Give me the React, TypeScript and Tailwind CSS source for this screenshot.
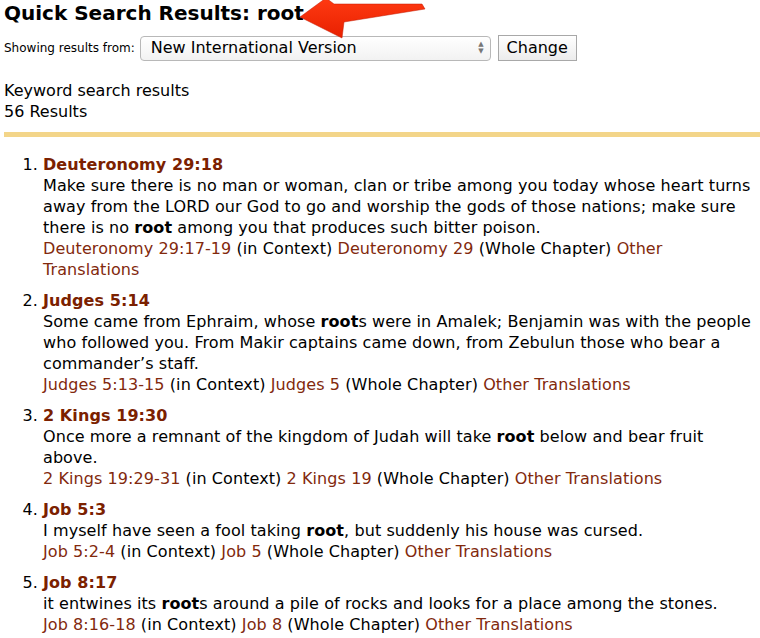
const RESULTS = [
  {
    ref: "Deuteronomy 29:18",
    text: [
      "Make sure there is no man or woman, clan or tribe among you today whose heart turns away from the LORD our God to go and worship the gods of those nations; make sure there is no ",
      { b: "root" },
      " among you that produces such bitter poison.",
    ],
    context: "Deuteronomy 29:17-19",
    chapter: "Deuteronomy 29",
  },
  {
    ref: "Judges 5:14",
    text: [
      "Some came from Ephraim, whose ",
      { b: "root" },
      "s were in Amalek; Benjamin was with the people who followed you. From Makir captains came down, from Zebulun those who bear a commander\u2019s staff.",
    ],
    context: "Judges 5:13-15",
    chapter: "Judges 5",
  },
  {
    ref: "2 Kings 19:30",
    text: [
      "Once more a remnant of the kingdom of Judah will take ",
      { b: "root" },
      " below and bear fruit above.",
    ],
    context: "2 Kings 19:29-31",
    chapter: "2 Kings 19",
  },
  {
    ref: "Job 5:3",
    text: [
      "I myself have seen a fool taking ",
      { b: "root" },
      ", but suddenly his house was cursed.",
    ],
    context: "Job 5:2-4",
    chapter: "Job 5",
  },
  {
    ref: "Job 8:17",
    text: [
      "it entwines its ",
      { b: "root" },
      "s around a pile of rocks and looks for a place among the stones.",
    ],
    context: "Job 8:16-18",
    chapter: "Job 8",
  },
];

type Part = string | { b: string };

function Arrow() {
  return (
    <svg className="absolute left-[294px] top-0" width="140" height="42" viewBox="0 0 140 42">
      <defs>
        <linearGradient id="ar" x1="0" y1="0" x2="0" y2="1">
          <stop offset="0" stopColor="#ff3a12" />
          <stop offset="1" stopColor="#e82000" />
        </linearGradient>
      </defs>
      <polygon
        points="6,17 32,-2 40,4 128,4 131,9 50,22 48,38"
        fill="url(#ar)"
        stroke="#c01800"
        strokeWidth="0.5"
      />
    </svg>
  );
}

export default function App() {
  return (
    <div className="relative min-h-[638px] w-[760px] overflow-hidden bg-white pl-1 text-black font-['Verdana','DejaVu_Sans',sans-serif]">
      <h1 className="pt-[1px] text-[20px] font-bold leading-[24px]">Quick Search Results: root</h1>
      <Arrow />

      <div className="mt-[10px] flex items-center">
        <span className="text-[12px]">Showing results from:</span>
        <div className="ml-[5px] flex h-[25px] w-[351px] items-center justify-between rounded-[4px] border border-[#b8b8b8] bg-gradient-to-b from-white to-[#f2f2f2] pl-[10px] pr-[6px] text-[16px]">
          <span>New International Version</span>
          <span className="flex flex-col text-[7px] leading-[7px] text-[#777]">
            <span>▲</span>
            <span>▼</span>
          </span>
        </div>
        <button className="ml-[7px] h-[26px] w-[79px] border border-[#a8a8a8] bg-gradient-to-b from-white to-[#ececec] text-[16px]">
          Change
        </button>
      </div>

      <div className="mt-[19px] text-[16px] leading-[21px]">
        <div>Keyword search results</div>
        <div>56 Results</div>
      </div>

      <div className="mt-[10px] h-[5px] bg-[#f3d589]" />

      <ol className="mt-[17px] list-decimal pl-[39px] pr-1 text-[16px] leading-[21px] tracking-[0.08px]">
        {RESULTS.map((r) => (
          <li key={r.ref} className="mb-[10px]">
            <a className="font-bold text-[#7b2100]">{r.ref}</a>
            <div>
              {(r.text as Part[]).map((p, i) =>
                typeof p === "string" ? <span key={i}>{p}</span> : <b key={i}>{p.b}</b>
              )}
            </div>
            <div>
              <a className="text-[#82290d]">{r.context}</a> (in Context){" "}
              <a className="text-[#82290d]">{r.chapter}</a> (Whole Chapter){" "}
              <a className="text-[#82290d]">Other Translations</a>
            </div>
          </li>
        ))}
      </ol>
    </div>
  );
}
